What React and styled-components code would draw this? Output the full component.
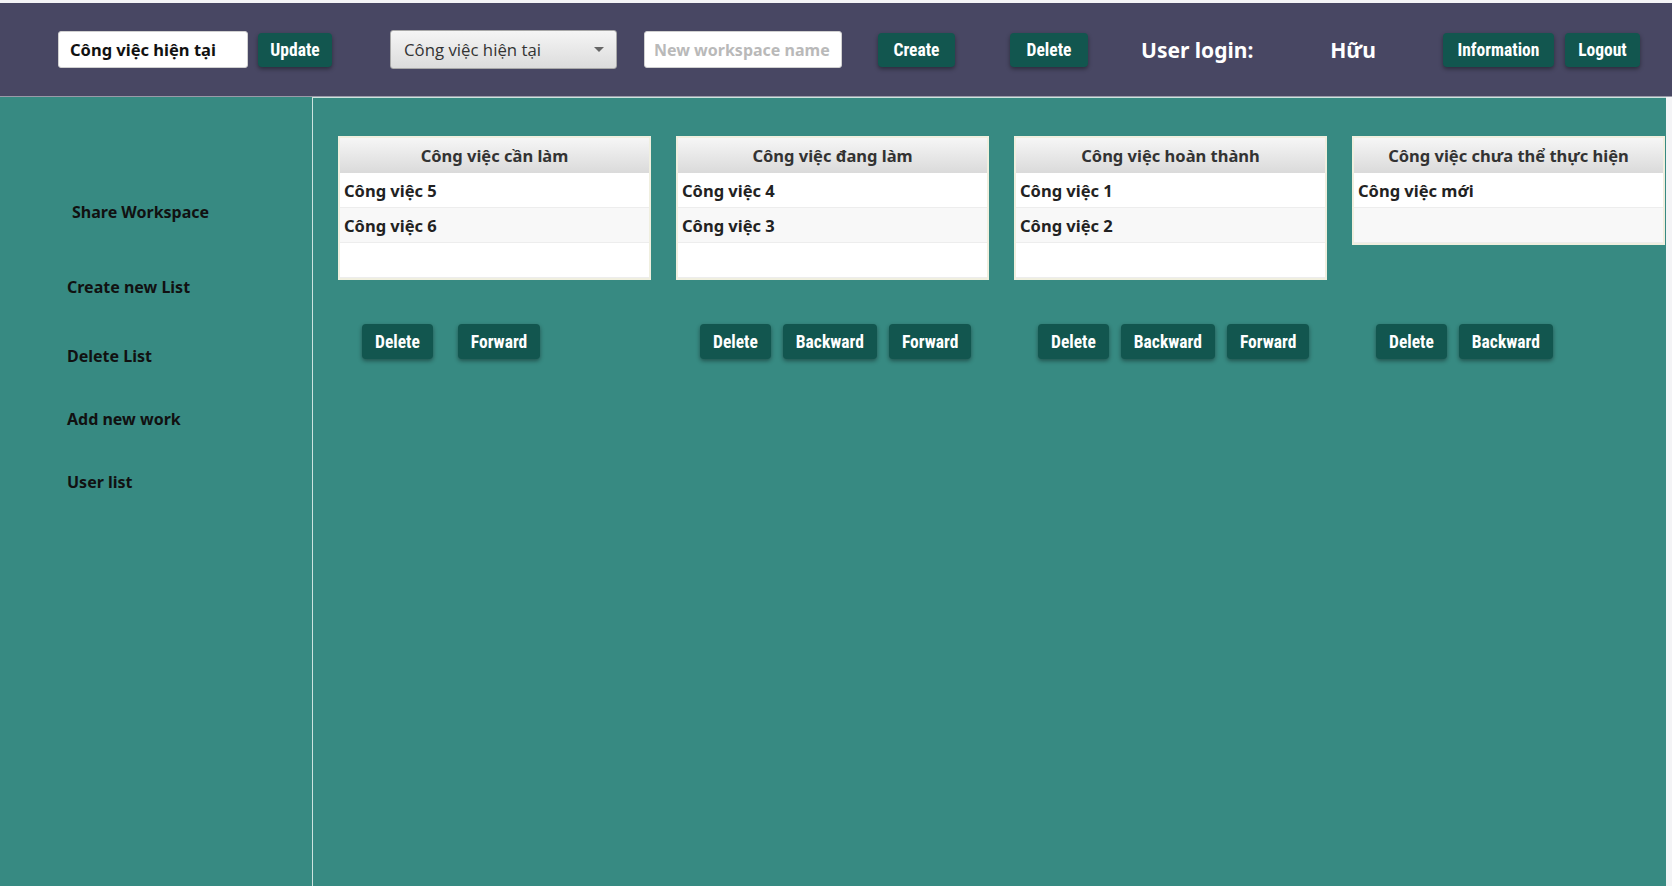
import React from 'react'
import styled, { createGlobalStyle } from 'styled-components'

const GlobalStyle = createGlobalStyle`
    html, body {
        margin: 0;
        padding: 0;
        background: #f4f4f6;
        height: 100%;
        overflow: hidden;
    }
    * {
        box-sizing: border-box;
    }
`;

const lists = [
    { title: 'Công việc cần làm', items: ['Công việc 5', 'Công việc 6', ''], actions: ['Delete', 'Forward'], wide: true },
    { title: 'Công việc đang làm', items: ['Công việc 4', 'Công việc 3', ''], actions: ['Delete', 'Backward', 'Forward'] },
    { title: 'Công việc hoàn thành', items: ['Công việc 1', 'Công việc 2', ''], actions: ['Delete', 'Backward', 'Forward'] },
    { title: 'Công việc chưa thể thực hiện', items: ['Công việc mới', ''], actions: ['Delete', 'Backward'] },
];

const menu = ['Create new List', 'Delete List', 'Add new work', 'User list'];

function App() {
    return (
        <Page>
            <GlobalStyle />
            <TopBar>
                <TextField defaultValue="Công việc hiện tại" />
                <Button $ml={10} $w={74}>Update</Button>
                <Select $ml={58}>
                    <span>Công việc hiện tại</span>
                    <Caret />
                </Select>
                <NameInput $ml={27} placeholder="New workspace name" />
                <Button $ml={36} $w={77}>Create</Button>
                <Button $ml={55} $w={78}>Delete</Button>
                <LoginText $ml={53}>User login:</LoginText>
                <LoginText $ml={77}>Hữu</LoginText>
                <Button $ml={67} $w={111}>Information</Button>
                <Button $ml={11} $w={75}>Logout</Button>
            </TopBar>
            <Body>
                <Sidebar>
                    <ShareLink>Share Workspace</ShareLink>
                    {menu.map((m) => <MenuItem key={m}>{m}</MenuItem>)}
                </Sidebar>
                <Board>
                    {lists.map((list) => (
                        <Column key={list.title}>
                            <Card>
                                <CardHeader>{list.title}</CardHeader>
                                {list.items.map((item, i) => (
                                    <Row key={i} $alt={i % 2 === 1}>{item}</Row>
                                ))}
                            </Card>
                            <Actions $wide={list.wide}>
                                {list.actions.map((a) => (
                                    <Button key={a} $small>{a}</Button>
                                ))}
                            </Actions>
                        </Column>
                    ))}
                </Board>
            </Body>
        </Page>
    )
}

const Page = styled.div`
    padding-top: 3px;
    height: 100vh;
    display: flex;
    flex-direction: column;
    font-family: "Noto Sans", "Open Sans", sans-serif;
`;

const TopBar = styled.div`
    height: 94px;
    flex-shrink: 0;
    background: #484763;
    display: flex;
    align-items: center;
    padding-left: 58px;
    border-bottom: 1px solid #9a9aa8;
`;

const TextField = styled.input`
    width: 190px;
    height: 37px;
    border: 1px solid #d0d0d0;
    border-radius: 3px;
    background: #fff;
    padding: 0 10px 0 11px;
    font-family: "Noto Sans", "Open Sans", sans-serif;
    font-weight: 700;
    font-size: 16.5px;
    color: #111;
    outline: none;
`;

const NameInput = styled(TextField)`
    width: 198px;
    margin-left: ${p => p.$ml}px;
    padding: 0 9px;
    font-size: 16px;
    &::placeholder {
        color: #b9b9b9;
    }
`;

const Button = styled.button`
    margin-left: ${p => p.$ml || 0}px;
    width: ${p => p.$w ? p.$w + 'px' : 'auto'};
    height: ${p => p.$small ? 35 : 34}px;
    padding: 0 ${p => p.$small ? 13 : 0}px;
    border: none;
    border-radius: 4px;
    background: #12564f;
    color: #fff;
    font-family: "Liberation Sans Narrow", "Roboto Condensed", Roboto, sans-serif;
    font-weight: 700;
    font-size: 17.5px;
    box-shadow: 0 2px 4px rgba(0, 0, 0, 0.4);
    cursor: pointer;
`;

const Select = styled.div`
    margin-left: ${p => p.$ml}px;
    width: 227px;
    height: 39px;
    display: flex;
    align-items: center;
    justify-content: space-between;
    padding: 0 12px 0 13px;
    background: linear-gradient(#f5f5f5, #dcdcdc);
    border: 1px solid #a8a8a8;
    border-radius: 3px;
    color: #333;
    span {
        font-family: "Open Sans", "Noto Sans", sans-serif;
        font-size: 16.8px;
    }
`;

const Caret = styled.i`
    width: 0;
    height: 0;
    border-left: 5px solid transparent;
    border-right: 5px solid transparent;
    border-top: 5px solid #666;
`;

const LoginText = styled.span`
    margin-left: ${p => p.$ml}px;
    color: #fff;
    font-weight: 700;
    font-size: 21px;
`;

const Body = styled.div`
    flex: 1;
    display: flex;
    min-height: 0;
`;

const Sidebar = styled.div`
    width: 312px;
    flex-shrink: 0;
    background: #378a82;
    padding: 104px 0 0 67px;
    display: flex;
    flex-direction: column;
`;

const MenuItem = styled.div`
    color: #111;
    font-weight: 700;
    font-size: 16px;
    line-height: 22px;
    margin-top: 41px;
    &:nth-of-type(2) {
        margin-top: 53px;
    }
    &:nth-of-type(3) {
        margin-top: 47px;
    }
`;

const ShareLink = styled(MenuItem)`
    margin: 0 0 0 5px;
    &&:nth-of-type(1) {
        margin-top: 0;
    }
`;

const Board = styled.div`
    flex: 1;
    margin-right: 6px;
    background: #378a82;
    border-left: 1px solid #cde3df;
    border-top: 1px solid #cde3df;
    padding: 38px 0 0 25px;
    display: flex;
    gap: 25px;
    overflow: hidden;
`;

const Column = styled.div`
    width: 313px;
    flex-shrink: 0;
    display: grid;
    grid-template-rows: 145px auto;
    row-gap: 43px;
    align-content: start;
`;

const Card = styled.div`
    align-self: start;
    background: #fff;
    border: 2px solid #f0efdf;
`;

const CardHeader = styled.div`
    height: 35px;
    display: flex;
    align-items: center;
    justify-content: center;
    background: linear-gradient(#f6f6f6, #dadada);
    color: #333;
    font-weight: 700;
    font-size: 16.5px;
`;

const Row = styled.div`
    height: 35px;
    display: flex;
    align-items: center;
    padding-left: 4px;
    background: ${p => p.$alt ? '#f8f8f8' : '#fff'};
    border-bottom: 1px solid #ededed;
    color: #222;
    font-weight: 700;
    font-size: 16.5px;
`;

const Actions = styled.div`
    display: flex;
    gap: ${p => p.$wide ? 25 : 12}px;
    padding-left: 24px;
`;

export default App
